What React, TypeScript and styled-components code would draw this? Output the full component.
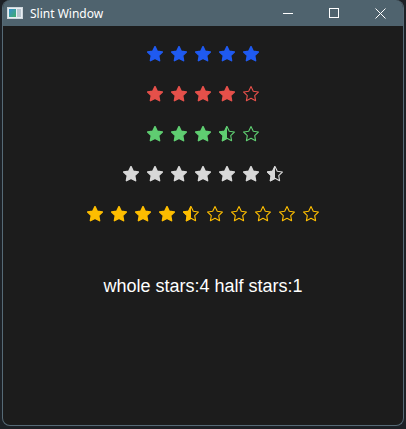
import React from "react";
import styled, { createGlobalStyle } from "styled-components";

const Global = createGlobalStyle`
  html, body { margin: 0; padding: 0; background: #1d2126; }
  body { width: 406px; height: 429px; overflow: hidden; }
`;

const Window = styled.div`
  margin-left: 2px;
  width: 400px;
  height: 425px;
  border: 1px solid #566a76;
  border-top: none;
  border-radius: 8px;
  background: #1c1c1c;
  overflow: hidden;
  display: flex;
  flex-direction: column;
`;

const TitleBar = styled.div`
  height: 26px;
  background: #4f636e;
  display: flex;
  align-items: center;
  padding-left: 4px;
  font-family: "Noto Sans", "Open Sans", sans-serif;
  font-size: 12px;
  color: #ffffff;
`;

const Title = styled.span`
  margin-left: 7px;
  flex: 1;
`;

const CaptionButton = styled.div`
  width: 46px;
  height: 26px;
  display: flex;
  align-items: center;
  justify-content: center;
`;

const Content = styled.div`
  flex: 1;
  display: flex;
  flex-direction: column;
  align-items: center;
  padding-top: 20px;
`;

const Rows = styled.div`
  display: flex;
  flex-direction: column;
  align-items: center;
  gap: 24px;
`;

const Row = styled.div`
  display: flex;
  gap: 8px;
  height: 16px;
`;

const Label = styled.div`
  margin-top: 54px;
  font-family: "Liberation Sans", Arial, sans-serif;
  font-size: 18px;
  color: #ffffff;
`;

const STAR =
  "12,2 15.09,8.26 22,9.27 17,14.14 18.18,21.02 12,17.77 5.82,21.02 7,14.14 2,9.27 8.91,8.26";

type Kind = "full" | "half" | "empty";

let uid = 0;

function Star({ kind, color }: { kind: Kind; color: string }) {
  const id = React.useMemo(() => `clip${uid++}`, []);
  return (
    <svg width="16" height="16" viewBox="1.2 1.2 21.6 21.6">
      <defs>
        <clipPath id={id}>
          <rect x="0" y="0" width="12" height="24" />
        </clipPath>
      </defs>
      {kind === "full" && (
        <polygon points={STAR} fill={color} stroke={color} strokeWidth="2" strokeLinejoin="round" />
      )}
      {kind === "half" && (
        <polygon
          points={STAR}
          fill={color}
          stroke={color}
          strokeWidth="2"
          strokeLinejoin="round"
          clipPath={`url(#${id})`}
        />
      )}
      {kind !== "full" && (
        <polygon points={STAR} fill="none" stroke={color} strokeWidth="1.5" strokeLinejoin="round" />
      )}
    </svg>
  );
}

function Rating({ total, value, color }: { total: number; value: number; color: string }) {
  const items: Kind[] = [];
  for (let i = 0; i < total; i++) {
    if (value >= i + 1) items.push("full");
    else if (value >= i + 0.5) items.push("half");
    else items.push("empty");
  }
  return (
    <Row>
      {items.map((k, i) => (
        <Star key={i} kind={k} color={color} />
      ))}
    </Row>
  );
}

function AppIcon() {
  return (
    <svg width="16" height="12" viewBox="0 0 16 12">
      <rect x="0.5" y="0.5" width="15" height="11" fill="#e8eef2" stroke="#cfd8dd" />
      <defs>
        <linearGradient id="ig" x1="0" y1="0" x2="1" y2="1">
          <stop offset="0" stopColor="#3a8fd0" />
          <stop offset="1" stopColor="#3fae6a" />
        </linearGradient>
      </defs>
      <rect x="2" y="2" width="7" height="8" fill="url(#ig)" />
      <rect x="10" y="2" width="4" height="8" fill="#b9c6cf" />
    </svg>
  );
}

export default function App() {
  return (
    <>
      <Global />
      <Window>
        <TitleBar>
          <AppIcon />
          <Title>Slint Window</Title>
          <CaptionButton>
            <svg width="10" height="10" viewBox="0 0 10 10">
              <line x1="0" y1="5.5" x2="10" y2="5.5" stroke="#fff" strokeWidth="1" />
            </svg>
          </CaptionButton>
          <CaptionButton>
            <svg width="10" height="10" viewBox="0 0 10 10">
              <rect x="0.5" y="0.5" width="9" height="9" fill="none" stroke="#fff" strokeWidth="1" />
            </svg>
          </CaptionButton>
          <CaptionButton>
            <svg width="11" height="11" viewBox="0 0 11 11">
              <path d="M0.5 0.5 L10.5 10.5 M10.5 0.5 L0.5 10.5" stroke="#fff" strokeWidth="1" />
            </svg>
          </CaptionButton>
        </TitleBar>
        <Content>
          <Rows>
            <Rating total={5} value={5} color="#1f5af0" />
            <Rating total={5} value={4} color="#e5504a" />
            <Rating total={5} value={3.5} color="#5fcd71" />
            <Rating total={7} value={6.5} color="#d8d8d8" />
            <Rating total={10} value={4.5} color="#fdbd00" />
          </Rows>
          <Label>whole stars:4 half stars:1</Label>
        </Content>
      </Window>
    </>
  );
}
